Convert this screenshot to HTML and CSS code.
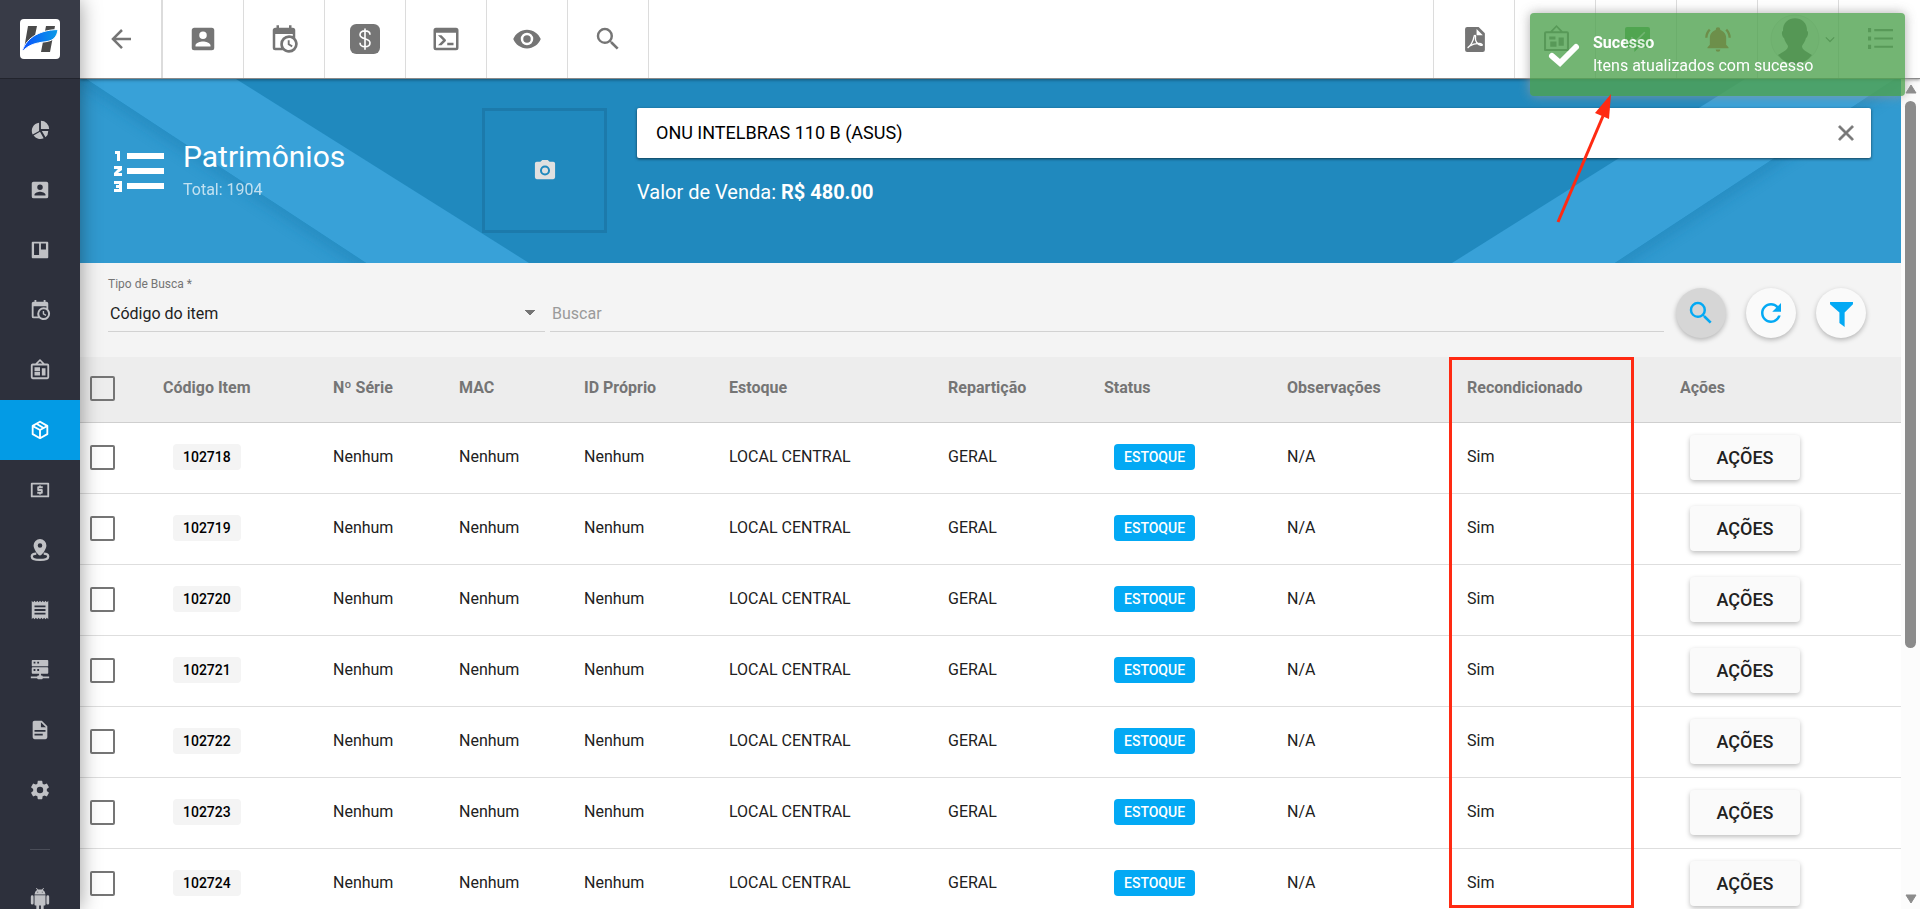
FILE: index.html
```
<!DOCTYPE html>
<html lang="pt-BR">
<head>
    <meta charset="UTF-8">
    <meta name="viewport" content="width=device-width, initial-scale=1.0">
    <title>Patrimônios</title>
    <link rel="stylesheet" href="styles.css">
</head>
<body>
    <aside class="sidebar">
        <a href="#" class="logo" aria-label="Início">
            <svg viewBox="0 0 40 40">
                <defs><linearGradient id="swoosh"><stop offset="0" stop-color="#0a50ff"/><stop offset="1" stop-color="#0a9be5"/></linearGradient></defs>
                <rect width="40" height="40" rx="4" fill="#fff"/>
                <path d="M8 7h9l-3 14L4 30zM26 7h9l-5 26h-9z" fill="#4a4a4a"/>
                <path d="M2 33C5 21 17 11 38 10.500c-1 7-4 11-12 12.200C15 24 8 26 2 33z" fill="url(#swoosh)" stroke="#fff" stroke-width="1"/>
            </svg>
        </a>
        <nav class="nav">
            <a href="#" class="nav-item" aria-label="Dashboard">
                <svg viewBox="0 0 24 24"><path d="M13 2a9 9 0 0 1 9 9h-9zM11 4v9l-7 4A9 9 0 0 1 11 4zM12 14l4 7a9 9 0 0 1-11-3zM14 13h7a9 9 0 0 1-3 7z"/></svg>
            </a>
            <a href="#" class="nav-item" aria-label="Clientes">
                <svg viewBox="0 0 24 24"><path d="M6 17c0-2 4-3.100 6-3.100s6 1.100 6 3.100v1H6m9-9a3 3 0 0 1-3 3 3 3 0 0 1-3-3 3 3 0 0 1 3-3 3 3 0 0 1 3 3M3 5v14a2 2 0 0 0 2 2h14a2 2 0 0 0 2-2V5a2 2 0 0 0-2-2H5c-1.110 0-2 .9-2 2z"/></svg>
            </a>
            <a href="#" class="nav-item" aria-label="Quadros">
                <svg viewBox="0 0 24 24"><path fill-rule="evenodd" d="M4 3h16a1 1 0 0 1 1 1v16a1 1 0 0 1-1 1H4a1 1 0 0 1-1-1V4a1 1 0 0 1 1-1zM5.500 5v12.500H11V5zM13 5v6.500h5.500V5z"/></svg>
            </a>
            <a href="#" class="nav-item" aria-label="Agenda">
                <svg viewBox="0 0 24 24"><path d="M15 13h1.500v2.820l2.440 1.410-.75 1.300L15 16.690V13m4-5H5v11h4.670c-.43-.91-.67-1.930-.67-3a7 7 0 0 1 7-7c1.070 0 2.090.24 3 .67V8M5 21a2 2 0 0 1-2-2V5c0-1.110.89-2 2-2h1V1h2v2h8V1h2v2h1a2 2 0 0 1 2 2v6.100c1.240 1.260 2 2.990 2 4.900a7 7 0 0 1-7 7c-1.910 0-3.640-.76-4.900-2H5m11-9.850A4.850 4.850 0 0 0 11.150 16c0 2.680 2.170 4.850 4.850 4.850A4.850 4.850 0 0 0 20.850 16c0-2.680-2.170-4.850-4.850-4.850z"/></svg>
            </a>
            <a href="#" class="nav-item" aria-label="Projetos">
                <svg viewBox="0 0 24 24"><path fill-rule="evenodd" d="M12 0l5 5h3a2 2 0 0 1 2 2v13a2 2 0 0 1-2 2H4a2 2 0 0 1-2-2V7a2 2 0 0 1 2-2h3zM12 2.500L9.500 5h5zM4 7v13h16V7zM6 9h6v4H6zM6 14h6v4H6zM14 10h4v8h-4z"/></svg>
            </a>
            <a href="#" class="nav-item active" aria-label="Estoque">
                <svg viewBox="0 0 24 24"><path d="M21 16.500c0 .38-.21.71-.53.88l-7.900 4.440c-.16.12-.36.18-.57.18s-.41-.06-.57-.18l-7.900-4.440A.991.991 0 0 1 3 16.500v-9c0-.38.21-.71.53-.88l7.900-4.440c.16-.12.36-.18.57-.18s.41.06.57.18l7.900 4.440c.32.17.53.5.53.88v9M12 4.150l-1.890 1.070L16 8.610l1.960-1.110L12 4.150M6.040 7.500L12 10.850l1.960-1.100-5.880-3.400L6.040 7.500M5 15.910l6 3.380v-6.710L5 9.210v6.700m14 0v-6.700l-6 3.370v6.710l6-3.380z"/></svg>
            </a>
            <a href="#" class="nav-item" aria-label="Financeiro">
                <svg viewBox="0 0 24 24"><path fill-rule="evenodd" d="M3 4h18a1 1 0 0 1 1 1v14a1 1 0 0 1-1 1H3a1 1 0 0 1-1-1V5a1 1 0 0 1 1-1zM4 6v12h16V6zM11 7h2v1h2v2h-4v1h3a1 1 0 0 1 1 1v3a1 1 0 0 1-1 1h-1v1h-2v-1H9v-2h4v-1h-3a1 1 0 0 1-1-1V9a1 1 0 0 1 1-1h1z"/></svg>
            </a>
            <a href="#" class="nav-item" aria-label="Mapa">
                <svg viewBox="0 0 24 24"><path fill-rule="evenodd" d="M12 0a7 7 0 0 1 7 7c0 4-5 11-7 11S5 11 5 7a7 7 0 0 1 7-7zM12 4.500a2.500 2.500 0 1 0 0 5 2.500 2.500 0 0 0 0-5z"/><path d="M8 16c-3 0-5 1-5 3 0 5 18 5 18 0 0-2-2-3-5-3" fill="none" stroke="currentColor" stroke-width="2.500"/></svg>
            </a>
            <a href="#" class="nav-item" aria-label="Notas">
                <svg viewBox="0 0 24 24"><path fill-rule="evenodd" d="M3 2l1.500 1.500L6 2l1.500 1.500L9 2l1.500 1.500L12 2l1.500 1.500L15 2l1.500 1.500L18 2l1.500 1.500L21 2v20l-1.500-1.500L18 22l-1.500-1.500L15 22l-1.500-1.500L12 22l-1.500-1.500L9 22l-1.500-1.500L6 22l-1.500-1.500L3 22zM6 7v2h12V7zM6 11v2h12v-2zM6 15v2h12v-2z"/></svg>
            </a>
            <a href="#" class="nav-item" aria-label="Servidores">
                <svg viewBox="0 0 24 24"><path fill-rule="evenodd" d="M4 1h16a1 1 0 0 1 1 1v5a1 1 0 0 1-1 1H4a1 1 0 0 1-1-1V2a1 1 0 0 1 1-1zM5 3v2h2V3zM9 3v2h2V3zM4 9h16a1 1 0 0 1 1 1v5a1 1 0 0 1-1 1h-7v2h1a1 1 0 0 1 1 1h7v2h-7a1 1 0 0 1-1 1h-4a1 1 0 0 1-1-1H2v-2h7a1 1 0 0 1 1-1h1v-2H4a1 1 0 0 1-1-1v-5a1 1 0 0 1 1-1zM5 11v2h2v-2zM9 11v2h2v-2z"/></svg>
            </a>
            <a href="#" class="nav-item" aria-label="Relatórios">
                <svg viewBox="0 0 24 24"><path d="M13 9h5.500L13 3.500V9M6 2h8l6 6v12a2 2 0 0 1-2 2H6a2 2 0 0 1-2-2V4c0-1.110.89-2 2-2m9 16v-2H6v2h9m3-4v-2H6v2h12z"/></svg>
            </a>
            <a href="#" class="nav-item" aria-label="Configurações">
                <svg viewBox="0 0 24 24"><path d="M12 15.500A3.500 3.500 0 0 1 8.500 12 3.500 3.500 0 0 1 12 8.500a3.500 3.500 0 0 1 3.500 3.500 3.500 3.500 0 0 1-3.500 3.500m7.430-2.530c.04-.32.07-.64.07-.97 0-.33-.03-.66-.07-1l2.110-1.630c.19-.15.24-.42.12-.64l-2-3.460c-.12-.22-.39-.31-.61-.22l-2.490 1c-.52-.39-1.060-.73-1.690-.98l-.37-2.650A.506.506 0 0 0 14 2h-4c-.25 0-.46.18-.5.42l-.37 2.650c-.63.25-1.170.59-1.690.98l-2.490-1c-.22-.09-.49 0-.61.22l-2 3.460c-.13.22-.07.49.12.64L4.570 11c-.04.34-.07.67-.07 1 0 .33.03.65.07.97l-2.110 1.660c-.19.15-.25.42-.12.64l2 3.460c.12.22.39.3.61.22l2.490-1.010c.52.4 1.060.74 1.690.99l.37 2.650c.04.24.25.42.5.42h4c.25 0 .46-.18.5-.42l.37-2.650c.63-.26 1.170-.59 1.690-.99l2.490 1.010c.22.08.49 0 .61-.22l2-3.460c.12-.22.07-.49-.12-.64l-2.110-1.660z"/></svg>
            </a>
            <hr class="nav-divider">
            <a href="#" class="nav-item" aria-label="Aplicativo Android">
                <svg viewBox="0 0 24 24"><path fill-rule="evenodd" d="M6 8h12v10a1 1 0 0 1-1 1h-1v4h-3v-4h-2v4H8v-4H7a1 1 0 0 1-1-1zM2 9.500a1.500 1.500 0 0 1 3 0v7a1.500 1.500 0 0 1-3 0zM19 9.500a1.500 1.500 0 0 1 3 0v7a1.500 1.500 0 0 1-3 0zM6 7a6 6 0 0 1 3-5L7.500.5l.7-.5L10 1.600h4L15.800 0l.7.5L15 2a6 6 0 0 1 3 5zM9 4v1h1V4zM14 4v1h1V4z"/></svg>
            </a>
        </nav>
    </aside>

    <div class="page">
        <header class="toolbar">
            <button class="tool tool-back" aria-label="Voltar">
                <svg viewBox="0 0 24 24"><path d="M20 11v2H8l5.500 5.500-1.420 1.420L4.160 12l7.920-7.920L13.500 5.500 8 11h12z"/></svg>
            </button>
            <button class="tool" aria-label="Clientes">
                <svg viewBox="0 0 24 24"><path d="M6 17c0-2 4-3.100 6-3.100s6 1.100 6 3.100v1H6m9-9a3 3 0 0 1-3 3 3 3 0 0 1-3-3 3 3 0 0 1 3-3 3 3 0 0 1 3 3M3 5v14a2 2 0 0 0 2 2h14a2 2 0 0 0 2-2V5a2 2 0 0 0-2-2H5c-1.110 0-2 .9-2 2z"/></svg>
            </button>
            <button class="tool" aria-label="Agenda">
                <svg viewBox="0 0 24 24"><path d="M15 13h1.500v2.820l2.440 1.410-.75 1.300L15 16.690V13m4-5H5v11h4.670c-.43-.91-.67-1.930-.67-3a7 7 0 0 1 7-7c1.070 0 2.090.24 3 .67V8M5 21a2 2 0 0 1-2-2V5c0-1.110.89-2 2-2h1V1h2v2h8V1h2v2h1a2 2 0 0 1 2 2v6.100c1.240 1.260 2 2.990 2 4.900a7 7 0 0 1-7 7c-1.910 0-3.640-.76-4.900-2H5m11-9.850A4.850 4.850 0 0 0 11.150 16c0 2.680 2.170 4.850 4.850 4.850A4.850 4.850 0 0 0 20.850 16c0-2.680-2.170-4.850-4.850-4.850z"/></svg>
            </button>
            <button class="tool" aria-label="Financeiro">
                <svg viewBox="0 0 24 24"><rect width="24" height="24" rx="5"/><path d="M16 8.500c0-2-1.500-3-4-3s-4 1-4 3c0 4 8 2.500 8 6.500 0 2-1.500 3.200-4 3.200S8 17 8 15M12 3.500v17" fill="none" stroke="#fff" stroke-width="1.300"/></svg>
            </button>
            <button class="tool" aria-label="Console">
                <svg viewBox="0 0 24 24"><path d="M20 19V7H4v12h16m0-16a2 2 0 0 1 2 2v14a2 2 0 0 1-2 2H4a2 2 0 0 1-2-2V5a2 2 0 0 1 2-2h16m-7 14v-2h5v2h-5m-3.420-4L5.570 9H8.400l3.300 3.300c.39.39.39 1.030 0 1.420L8.420 17H5.590l3.990-4z"/></svg>
            </button>
            <button class="tool" aria-label="Visualizar">
                <svg viewBox="0 0 24 24"><path d="M12 9a3 3 0 0 0-3 3 3 3 0 0 0 3 3 3 3 0 0 0 3-3 3 3 0 0 0-3-3m0 8a5 5 0 0 1-5-5 5 5 0 0 1 5-5 5 5 0 0 1 5 5 5 5 0 0 1-5 5m0-12.500C7 4.500 2.730 7.610 1 12c1.730 4.390 6 7.500 11 7.500s9.270-3.110 11-7.500c-1.730-4.390-6-7.500-11-7.500z"/></svg>
            </button>
            <button class="tool" aria-label="Pesquisar">
                <svg viewBox="0 0 24 24"><path d="M15.500 14h-.79l-.28-.27A6.471 6.471 0 0 0 16 9.500 6.500 6.500 0 1 0 9.500 16c1.610 0 3.090-.59 4.230-1.570l.27.28v.79l5 4.990L20.490 19l-4.990-5zm-6 0C7.010 14 5 11.990 5 9.500S7.010 5 9.500 5 14 7.010 14 9.500 11.990 14 9.500 14z"/></svg>
            </button>
            <div class="toolbar-right">
                <button class="tool" aria-label="PDF">
                    <svg viewBox="0 0 24 24"><path d="M4 0h11l6 6v16a2 2 0 0 1-2 2H4a2 2 0 0 1-2-2V2a2 2 0 0 1 2-2z"/><path d="M13 2v6h6z" fill="#fff"/><path d="M5 19.500c2-1 5-6 5.500-10 .2-2 2-2 1.500.5-.7 3.500 2 7 5 7.500s1-2-2-1.800c-3 .2-6 1-8.500 2.500-1.500 1-2 2.300-1.500 1.300z" fill="none" stroke="#fff" stroke-width="1.300"/></svg>
                </button>
                <button class="tool" aria-label="Projetos">
                    <svg viewBox="0 0 24 24"><path fill-rule="evenodd" d="M12-2l6 6h4a2 2 0 0 1 2 2v16a1 1 0 0 1-1 1H1a1 1 0 0 1-1-1V6a2 2 0 0 1 2-2h4zM12 .3L8.500 4h7zM2 6v15h20V6zM5 9h6v3H5zM6 14h6v5H6zM14 10h5v8h-5z"/></svg>
                </button>
                <button class="tool tool-green" aria-label="Mensagens">
                    <svg viewBox="0 0 24 24"><path d="M2 0h20a2 2 0 0 1 2 2v16a2 2 0 0 1-2 2h-9l-4 4v-4H2a2 2 0 0 1-2-2V2a2 2 0 0 1 2-2z"/><path d="M6 10l4 4 9-9" fill="none" stroke="#fff" stroke-width="1.500"/></svg>
                </button>
                <button class="tool tool-red" aria-label="Notificações">
                    <svg viewBox="0 0 24 24"><path d="M21 19v1H3v-1l2-2v-6c0-3.100 2.030-5.830 5-6.710V4a2 2 0 0 1 2-2 2 2 0 0 1 2 2v.29c2.970.88 5 3.610 5 6.710v6l2 2m-7 2a2 2 0 0 1-2 2 2 2 0 0 1-2-2m9.750-17.810l-1.420 1.420A8.982 8.982 0 0 1 21 11h2c0-2.930-1.160-5.750-3.250-7.810M1 11h2c0-2.400.96-4.700 2.670-6.390L4.250 3.190A10.960 10.960 0 0 0 1 11z"/></svg>
                </button>
                <button class="tool tool-user" aria-label="Usuário">
                    <svg class="avatar" viewBox="0 0 50 50"><circle cx="25" cy="25" r="24" fill="#f4f4f4" stroke="#e4e4e4"/><path d="M13 17C12 0 38 0 37 17c2 0 1 6-1 7-1 4-3 6-4 8 0 4 4 5 10 9-9 12-25 12-34 0 6-4 10-5 10-9-1-2-3-4-4-8-2-1-3-7-1-7z" fill="#6a6a6a"/></svg>
                    <svg class="chevron" viewBox="0 0 12 12"><path d="M1 4l5 5 5-5" fill="none" stroke="currentColor" stroke-width="1.500"/></svg>
                </button>
                <button class="tool" aria-label="Menu">
                    <svg viewBox="0 0 24 24"><path d="M6 2h18v2H6zM6 10h18v2H6zM6 18h18v2H6zM0 1h3v4H0zM0 9h3v4H0zM0 17h3v4H0z"/></svg>
                </button>
            </div>
        </header>

        <div class="body">
            <main class="content">
                <section class="banner">
                    <svg class="stripes stripes-left" viewBox="0 0 450 184">
                        <defs>
                            <filter id="soft" x="-20%" y="-20%" width="140%" height="140%"><feGaussianBlur stdDeviation="7"/></filter>
                            <clipPath id="under"><path d="M0 0h6l280 184H0z"/></clipPath>
                        </defs>
                        <path d="M6 0h150l293 184H286z" fill="#38a1d8"/>
                        <path d="M0 0h6l280 184H0z" fill="#319ad0"/>
                        <g clip-path="url(#under)"><path d="M-10-10L296 191" stroke="#1f80b4" stroke-width="12" opacity=".6" filter="url(#soft)"/></g>
                    </svg>
                    <svg class="stripes stripes-right" viewBox="0 0 450 184">
                        <path d="M6 0h150l293 184H286z" fill="#38a1d8"/>
                        <path d="M0 0h6l280 184H0z" fill="#319ad0"/>
                        <g clip-path="url(#under)"><path d="M-10-10L296 191" stroke="#1f80b4" stroke-width="12" opacity=".6" filter="url(#soft)"/></g>
                    </svg>

                    <div class="heading">
                        <svg class="heading-icon" viewBox="0 0 50 42"><path d="M13 3h37v6H13zM13 18h37v6H13zM13 33h37v6H13zM1 1h5v10H3V4H1zM0 16h8v4l-4 3h4v3H0v-3l4-4H0zM0 31h8v11H0v-3h5v-1H2v-3h3v-1H0z"/></svg>
                        <div>
                            <h1 class="title">Patrimônios</h1>
                            <p class="total">Total: 1904</p>
                        </div>
                    </div>
                    <button class="photo" aria-label="Foto do item">
                        <svg viewBox="0 0 24 24"><path fill-rule="evenodd" d="M9 1L7 3H3a2 2 0 0 0-2 2v15a2 2 0 0 0 2 2h18a2 2 0 0 0 2-2V5a2 2 0 0 0-2-2h-4l-2-2zm3 6a5.500 5.500 0 1 1 0 11 5.500 5.500 0 0 1 0-11zm0 2.200a3.300 3.300 0 1 0 0 6.600 3.300 3.300 0 0 0 0-6.600z"/></svg>
                    </button>
                    <div class="product">
                        <div class="product-search">
                            <input type="text" aria-label="Produto" value="ONU INTELBRAS 110 B (ASUS)">
                            <button aria-label="Limpar">
                                <svg viewBox="0 0 24 24"><path d="M19 6.410L17.590 5 12 10.590 6.410 5 5 6.410 10.590 12 5 17.590 6.410 19 12 13.410 17.590 19 19 17.590 13.410 12 19 6.410z" stroke="currentColor" stroke-width=".6"/></svg>
                            </button>
                        </div>
                        <p class="price">Valor de Venda: <strong>R$ 480.00</strong></p>
                    </div>
                </section>

                <section class="filters">
                    <div class="field field-type">
                        <label for="tipo">Tipo de Busca *</label>
                        <select id="tipo">
                            <option>Código do item</option>
                        </select>
                    </div>
                    <div class="field field-search">
                        <input id="buscar" type="text" placeholder="Buscar" aria-label="Buscar">
                    </div>
                    <div class="filter-actions">
                        <button class="round focused" aria-label="Pesquisar">
                            <svg viewBox="0 0 24 24"><path d="M15.500 14h-.79l-.28-.27A6.471 6.471 0 0 0 16 9.500 6.500 6.500 0 1 0 9.500 16c1.610 0 3.090-.59 4.230-1.570l.27.28v.79l5 4.990L20.490 19l-4.990-5zm-6 0C7.010 14 5 11.990 5 9.500S7.010 5 9.500 5 14 7.010 14 9.500 11.990 14 9.500 14z"/></svg>
                        </button>
                        <button class="round" aria-label="Atualizar">
                            <svg viewBox="0 0 24 24"><path d="M17.650 6.350C16.200 4.900 14.210 4 12 4c-4.420 0-7.990 3.580-7.990 8s3.570 8 7.990 8c3.730 0 6.840-2.550 7.730-6h-2.080c-.82 2.330-3.040 4-5.650 4-3.310 0-6-2.690-6-6s2.690-6 6-6c1.660 0 3.140.69 4.220 1.780L13 11h7V4l-2.350 2.350z"/></svg>
                        </button>
                        <button class="round" aria-label="Filtrar">
                            <svg viewBox="0 0 24 24"><path d="M1 1h22v2l-8 8v14l-5-4V11L1 3z"/></svg>
                        </button>
                    </div>
                </section>

                <table class="items">
                    <colgroup>
                        <col class="col-check"><col class="col-code"><col class="col-serial"><col class="col-mac"><col class="col-id"><col class="col-stock"><col class="col-part"><col class="col-status"><col class="col-notes"><col class="col-recond"><col>
                    </colgroup>
                    <thead>
                        <tr>
                            <th><input type="checkbox" aria-label="Selecionar todos"></th>
                            <th>Código Item</th>
                            <th>Nº Série</th>
                            <th>MAC</th>
                            <th>ID Próprio</th>
                            <th>Estoque</th>
                            <th>Repartição</th>
                            <th>Status</th>
                            <th>Observações</th>
                            <th>Recondicionado</th>
                            <th>Ações</th>
                        </tr>
                    </thead>
                    <tbody>
                        <tr>
                            <td><input type="checkbox" aria-label="Selecionar 102718"></td>
                            <td><span class="badge">102718</span></td>
                            <td>Nenhum</td><td>Nenhum</td><td>Nenhum</td>
                            <td>LOCAL CENTRAL</td><td>GERAL</td>
                            <td><span class="badge badge-info">ESTOQUE</span></td>
                            <td>N/A</td><td>Sim</td>
                            <td><button class="action">AÇÕES</button></td>
                        </tr>
                        <tr>
                            <td><input type="checkbox" aria-label="Selecionar 102719"></td>
                            <td><span class="badge">102719</span></td>
                            <td>Nenhum</td><td>Nenhum</td><td>Nenhum</td>
                            <td>LOCAL CENTRAL</td><td>GERAL</td>
                            <td><span class="badge badge-info">ESTOQUE</span></td>
                            <td>N/A</td><td>Sim</td>
                            <td><button class="action">AÇÕES</button></td>
                        </tr>
                        <tr>
                            <td><input type="checkbox" aria-label="Selecionar 102720"></td>
                            <td><span class="badge">102720</span></td>
                            <td>Nenhum</td><td>Nenhum</td><td>Nenhum</td>
                            <td>LOCAL CENTRAL</td><td>GERAL</td>
                            <td><span class="badge badge-info">ESTOQUE</span></td>
                            <td>N/A</td><td>Sim</td>
                            <td><button class="action">AÇÕES</button></td>
                        </tr>
                        <tr>
                            <td><input type="checkbox" aria-label="Selecionar 102721"></td>
                            <td><span class="badge">102721</span></td>
                            <td>Nenhum</td><td>Nenhum</td><td>Nenhum</td>
                            <td>LOCAL CENTRAL</td><td>GERAL</td>
                            <td><span class="badge badge-info">ESTOQUE</span></td>
                            <td>N/A</td><td>Sim</td>
                            <td><button class="action">AÇÕES</button></td>
                        </tr>
                        <tr>
                            <td><input type="checkbox" aria-label="Selecionar 102722"></td>
                            <td><span class="badge">102722</span></td>
                            <td>Nenhum</td><td>Nenhum</td><td>Nenhum</td>
                            <td>LOCAL CENTRAL</td><td>GERAL</td>
                            <td><span class="badge badge-info">ESTOQUE</span></td>
                            <td>N/A</td><td>Sim</td>
                            <td><button class="action">AÇÕES</button></td>
                        </tr>
                        <tr>
                            <td><input type="checkbox" aria-label="Selecionar 102723"></td>
                            <td><span class="badge">102723</span></td>
                            <td>Nenhum</td><td>Nenhum</td><td>Nenhum</td>
                            <td>LOCAL CENTRAL</td><td>GERAL</td>
                            <td><span class="badge badge-info">ESTOQUE</span></td>
                            <td>N/A</td><td>Sim</td>
                            <td><button class="action">AÇÕES</button></td>
                        </tr>
                        <tr>
                            <td><input type="checkbox" aria-label="Selecionar 102724"></td>
                            <td><span class="badge">102724</span></td>
                            <td>Nenhum</td><td>Nenhum</td><td>Nenhum</td>
                            <td>LOCAL CENTRAL</td><td>GERAL</td>
                            <td><span class="badge badge-info">ESTOQUE</span></td>
                            <td>N/A</td><td>Sim</td>
                            <td><button class="action">AÇÕES</button></td>
                        </tr>
                    </tbody>
                </table>
            </main>
            <div class="scrollbar">
                <svg viewBox="0 0 12 10"><path d="M6 1l5 8H1z" stroke="currentColor" stroke-linejoin="round"/></svg>
                <div class="scroll-track"><div class="scroll-thumb"></div></div>
                <svg viewBox="0 0 12 10"><path d="M6 9l5-8H1z" stroke="currentColor" stroke-linejoin="round"/></svg>
            </div>
        </div>
    </div>

    <div class="toast" role="status">
        <svg viewBox="0 0 30 24"><path d="M3 13l8 7L27 4" fill="none" stroke="#fff" stroke-width="6" stroke-linecap="round"/></svg>
        <div class="toast-text">
            <strong>Sucesso</strong>
            <p>Itens atualizados com sucesso</p>
        </div>
    </div>

    <!-- Marcações -->
    <div class="mark-column"></div>
    <svg class="mark-arrow" viewBox="0 0 60 132"><path d="M3 128L48 22" stroke="#ff2a12" stroke-width="3"/><path d="M56 0l-2 25-14-6z" fill="#ff2a12"/></svg>
</body>
</html>
```
FILE: styles.css
```
* {
    margin: 0;
    padding: 0;
    box-sizing: border-box;
}

body {
    font-family: Roboto, "Liberation Sans", sans-serif;
    font-size: 16px;
    color: #212121;
    background-color: #fff;
    height: 100vh;
    display: flex;
    overflow: hidden;
    position: relative;
}

svg {
    display: block;
    fill: currentColor;
    flex-shrink: 0;
    overflow: visible;
}

button {
    font-family: inherit;
    border: 0;
    background: none;
    color: inherit;
    cursor: pointer;
}

/* Sidebar */
.sidebar {
    width: 80px;
    flex-shrink: 0;
    background-color: #2d303c;
    box-shadow: 0 0 20px rgba(0, 0, 0, 0.4);
    overflow: hidden;
    position: relative;
    z-index: 2;
}

.logo {
    height: 79px;
    display: flex;
    align-items: center;
    justify-content: center;
    background-color: #383b47;
    border-bottom: 1px solid #22242d;
}

.logo svg {
    width: 40px;
    height: 40px;
}

.nav {
    padding-top: 21px;
}

.nav-item {
    height: 60px;
    display: flex;
    align-items: center;
    justify-content: center;
    color: #c0c1c5;
}

.nav-item svg {
    width: 22px;
    height: 22px;
}

.nav-item.active {
    background-color: #039be5;
    color: #fff;
}

.nav-divider {
    width: 20px;
    margin: 29px auto 19px;
    border: 0;
    border-top: 1px solid #4a4d58;
}

.page {
    flex: 1;
    min-width: 0;
    display: flex;
    flex-direction: column;
}

/* Toolbar */
.toolbar {
    height: 79px;
    flex-shrink: 0;
    display: flex;
    border-bottom: 1px solid #8a8a8a;
    box-shadow: 0 1px 3px rgba(0, 0, 0, 0.4);
    background-color: #fff;
    position: relative;
    z-index: 1;
}

.toolbar-right {
    display: flex;
    margin-left: auto;
    border-left: 1px solid #dcdcdc;
}

.tool {
    width: 81px;
    display: flex;
    align-items: center;
    justify-content: center;
    border-right: 1px solid #dcdcdc;
    color: #757575;
}

.tool-back {
    width: 83px;
    border-right-width: 2px;
}

.tool svg {
    width: 30px;
    height: 30px;
}

.toolbar-right .tool {
    padding-left: 2px;
}

.toolbar-right .tool svg {
    width: 25px;
    height: 25px;
}

.toolbar-right .tool:last-child {
    border-right: 0;
}

.tool-green {
    color: #4caf50;
}

.toolbar .tool-red svg {
    width: 28px;
    height: 28px;
}

.tool-red {
    color: #e0412f;
}

.toolbar-right .tool-user {
    padding-left: 8px;
}

.toolbar-right .tool .avatar {
    width: 50px;
    height: 50px;
}

.toolbar-right .tool .chevron {
    width: 10px;
    height: 10px;
    margin-left: 5px;
}

.body {
    flex: 1;
    min-height: 0;
    display: flex;
}

.content {
    flex: 1;
    min-width: 0;
    overflow: hidden;
}

/* Banner */
.banner {
    height: 184px;
    display: flex;
    padding: 29px 30px 0;
    background-color: #2089be;
    color: #fff;
    position: relative;
}

.stripes {
    position: absolute;
    top: 0;
    left: 0;
    width: 450px;
    height: 184px;
    overflow: hidden;
}

.stripes-right {
    left: auto;
    right: 0;
    transform: scaleX(-1);
}

.heading {
    width: 372px;
    height: 125px;
    display: flex;
    align-items: center;
    gap: 19px;
    padding-left: 4px;
    position: relative;
}

.heading-icon {
    width: 50px;
    height: 42px;
}

.title {
    font-size: 30px;
    line-height: 36px;
    font-weight: 400;
}

.total {
    margin-top: 3px;
    line-height: 24px;
    opacity: 0.7;
}

.photo {
    width: 125px;
    height: 125px;
    margin-right: 30px;
    padding-bottom: 2px;
    display: flex;
    align-items: center;
    justify-content: center;
    border: 3px solid #1c7aab;
    color: #e0e0e0;
}

.photo svg {
    width: 22px;
    height: 22px;
}

.product {
    flex: 1;
    position: relative;
}

.product-search {
    height: 50px;
    display: flex;
    background-color: #fff;
    border-radius: 2px;
    box-shadow: 0 1px 3px rgba(0, 0, 0, 0.6);
}

.product-search input {
    flex: 1;
    border: 0;
    outline: 0;
    background: none;
    padding: 0 0 2px 19px;
    font: 18px Roboto, "Liberation Sans", sans-serif;
    color: #000;
}

.product-search button {
    width: 50px;
    display: flex;
    align-items: center;
    justify-content: center;
    color: #757575;
}

.product-search svg {
    width: 26px;
    height: 26px;
}

.price {
    margin-top: 22px;
    font-size: 20px;
    line-height: 24px;
}

.price strong {
    font-weight: 700;
}

/* Filters */
.filters {
    height: 94px;
    display: flex;
    gap: 5px;
    padding: 12px 35px 0 28px;
    background-color: #f4f4f4;
}

.field {
    height: 57px;
    display: flex;
    flex-direction: column;
    justify-content: space-between;
    border-bottom: 1px solid #d2d2d2;
}

.field-type {
    width: 437px;
}

.field-search {
    flex: 1;
    justify-content: flex-end;
}

.field label {
    font-size: 12px;
    line-height: 18px;
    color: #757575;
}

.field select,
.field input {
    height: 36px;
    border: 0;
    outline: 0;
    padding-left: 2px;
    background: none;
    font: 16px Roboto, "Liberation Sans", sans-serif;
    color: #212121;
}

.field select {
    appearance: none;
    background: linear-gradient(to bottom right, #757575 50%, transparent 50%) right 10px center / 5px 6px no-repeat,
        linear-gradient(to bottom left, #757575 50%, transparent 50%) right 15px center / 5px 6px no-repeat;
}

.field input::placeholder {
    color: #9a9a9a;
}

.filter-actions {
    display: flex;
    gap: 20px;
    padding: 13px 0 0 7px;
}

.round {
    width: 50px;
    height: 50px;
    display: flex;
    align-items: center;
    justify-content: center;
    border-radius: 50%;
    background-color: #fafafa;
    box-shadow: 0 2px 5px rgba(0, 0, 0, 0.26);
    color: #03a9f4;
}

.round.focused {
    background-color: #d6d6d6;
}

.round svg {
    width: 30px;
    height: 30px;
}

.round:last-child svg {
    width: 25px;
    height: 25px;
}

/* Table */
.items {
    width: 100%;
    table-layout: fixed;
    border-collapse: separate;
    border-spacing: 0;
}

.col-check { width: 83px; }
.col-code { width: 170px; }
.col-serial { width: 126px; }
.col-mac { width: 125px; }
.col-id { width: 145px; }
.col-stock { width: 219px; }
.col-part { width: 156px; }
.col-status { width: 183px; }
.col-notes { width: 180px; }
.col-recond { width: 213px; }

.items th {
    height: 66px;
    padding-bottom: 4px;
    background-color: #ededed;
    border-bottom: 1px solid #cfcfcf;
    text-align: left;
    font-weight: 700;
    color: #757575;
}

.items td {
    height: 71px;
    padding-bottom: 4px;
    border-bottom: 1px solid #dedede;
}

.items th:first-child,
.items td:first-child {
    padding: 0 0 2px 10px;
}

.items input {
    appearance: none;
    display: block;
    width: 25px;
    height: 25px;
    border: 2px solid #757575;
    border-radius: 2px;
}

.badge {
    display: inline-block;
    margin: 2px 0 0 10px;
    padding: 0 10px;
    border-radius: 4px;
    background-color: #f4f4f4;
    color: #000;
    font-size: 14px;
    line-height: 26px;
    font-weight: 500;
}

.badge-info {
    background-color: #03a9f4;
    color: #fff;
}

.items td:last-child {
    padding: 0 0 2px;
}

.action {
    display: block;
    width: 110px;
    height: 45px;
    margin-left: 10px;
    border-radius: 4px;
    background-color: #fafafa;
    box-shadow: 0 2px 5px rgba(0, 0, 0, 0.26);
    font-size: 18px;
    font-weight: 500;
}

/* Scrollbar */
.scrollbar {
    width: 19px;
    flex-shrink: 0;
    display: flex;
    flex-direction: column;
    align-items: center;
    padding: 5px 0;
    background-color: #fcfcfc;
    color: #8b8b8b;
}

.scrollbar svg {
    width: 12px;
    height: 10px;
}

.scroll-track {
    flex: 1;
    width: 11px;
    padding-top: 7px;
}

.scroll-thumb {
    height: 69%;
    border-radius: 6px;
    background-color: #8b8b8b;
}

/* Toast */
.toast {
    position: absolute;
    top: 13px;
    right: 15px;
    width: 375px;
    height: 83px;
    display: flex;
    gap: 14px;
    align-items: center;
    padding-left: 19px;
    border-radius: 4px;
    background-color: #51a351;
    box-shadow: 0 0 12px #999;
    color: #fff;
    line-height: 23px;
    opacity: 0.8;
    z-index: 3;
}

.toast svg {
    width: 30px;
    height: 24px;
}

.toast-text {
    padding-bottom: 2px;
}

.mark-column {
    position: absolute;
    top: 357px;
    left: 1449px;
    width: 185px;
    height: 551px;
    border: 3px solid #ff2a12;
    z-index: 4;
}

.mark-arrow {
    position: absolute;
    top: 94px;
    left: 1555px;
    width: 60px;
    height: 132px;
    z-index: 4;
}
```
